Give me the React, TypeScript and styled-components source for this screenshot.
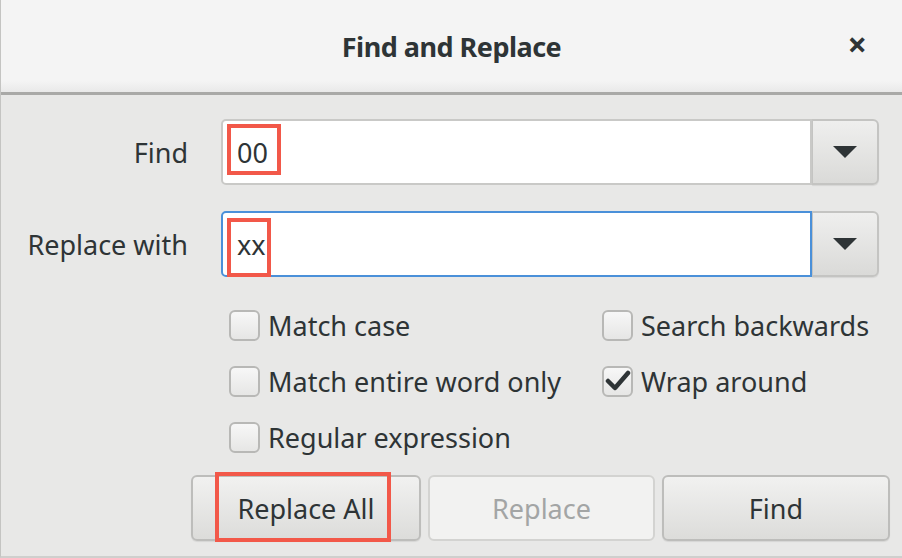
import { createGlobalStyle, styled } from "styled-components";

const GlobalStyle = createGlobalStyle`
  html, body {
    margin: 0;
    padding: 0;
    background: #e8e8e7;
  }
  * {
    box-sizing: border-box;
  }
`;

const FONT = `"Noto Sans", "Open Sans", sans-serif`;

function ArrowDown() {
	return (
		<svg width="26" height="14" viewBox="0 0 26 14">
			<path d="M1 1 H25 L13 13 Z" fill="#2e3436" />
		</svg>
	);
}

function CheckMark() {
	return (
		<svg width="26" height="24" viewBox="0 0 26 24">
			<path
				d="M3 12 L10 19 L23 4"
				fill="none"
				stroke="#2e3436"
				strokeWidth="4.5"
				strokeLinecap="round"
				strokeLinejoin="round"
			/>
		</svg>
	);
}

function Check({ label, checked = false }: { label: string; checked?: boolean }) {
	return (
		<CheckRow>
			<CheckBox>{checked && <CheckMark />}</CheckBox>
			<CheckLabel>{label}</CheckLabel>
		</CheckRow>
	);
}

export default function App() {
	return (
		<>
			<GlobalStyle />
			<Window>
				<TitleBar>
					<Title>Find and Replace</Title>
					<CloseButton aria-label="Close">×</CloseButton>
				</TitleBar>
				<Body>
					<FieldRow>
						<FieldLabel htmlFor="find-entry">Find</FieldLabel>
						<Combo>
							<EntryWrap>
								<Entry id="find-entry" value="00" readOnly />
								<Mark $left={4} $top={3} $width={54} $height={51} />
							</EntryWrap>
							<DropButton>
								<ArrowDown />
							</DropButton>
						</Combo>
					</FieldRow>
					<FieldRow>
						<FieldLabel htmlFor="replace-entry">Replace with</FieldLabel>
						<Combo>
							<EntryWrap $focused>
								<Entry id="replace-entry" value="xx" readOnly />
								<Mark $left={4} $top={5} $width={44} $height={59} />
							</EntryWrap>
							<DropButton>
								<ArrowDown />
							</DropButton>
						</Combo>
					</FieldRow>
					<Options>
						<Check label="Match case" />
						<Check label="Search backwards" />
						<Check label="Match entire word only" />
						<Check label="Wrap around" checked />
						<Check label="Regular expression" />
					</Options>
					<ButtonBar>
						<Button>
							Replace All
							<Mark $left={22} $top={-5} $width={176} $height={70} />
						</Button>
						<Button disabled>Replace</Button>
						<Button>Find</Button>
					</ButtonBar>
				</Body>
			</Window>
		</>
	);
}

//#region Styled Components
const Window = styled.div`
  width: 902px;
  height: 558px;
  display: flex;
  flex-direction: column;
  background: #e8e8e7;
  border-left: 1px solid #c4c4c2;
  border-bottom: 2px solid #cfcfcd;
  font-family: ${FONT};
  color: #2e3436;
  overflow: hidden;
`;

const TitleBar = styled.div`
  height: 95px;
  flex-shrink: 0;
  display: flex;
  align-items: center;
  justify-content: center;
  position: relative;
  background: linear-gradient(to bottom, #f4f4f4 0%, #f4f4f4 88%, #e9e9e9 100%);
  border-bottom: 3px solid #a9a9a7;
`;

const Title = styled.h1`
  margin: 0;
  font-size: 27px;
  font-weight: 700;
  letter-spacing: -0.5px;
  color: #2e3436;
  padding-top: 0;
`;

const CloseButton = styled.button`
  position: absolute;
  right: 35px;
  top: 27px;
  border: none;
  background: transparent;
  font-family: ${FONT};
  font-size: 34px;
  font-weight: 700;
  line-height: 1;
  color: #2e3436;
  padding: 0;
`;

const Body = styled.div`
  display: flex;
  flex-direction: column;
  padding: 24px 13px 0 0;
`;

const FieldRow = styled.div`
  display: grid;
  grid-template-columns: 187px 1fr;
  column-gap: 33px;
  align-items: center;
  padding-right: 10px;
  margin-bottom: 26px;
`;

const FieldLabel = styled.label`
  text-align: right;
  font-size: 27px;
  color: #2e3436;
`;

const Combo = styled.div`
  display: flex;
  height: 66px;
`;

const EntryWrap = styled.div<{ $focused?: boolean }>`
  flex: 1;
  position: relative;
  background: #ffffff;
  border: ${({ $focused }) => ($focused ? "2px solid #4a90d9" : "2px solid #c9c9c7")};
  border-radius: 5px 0 0 5px;
  display: flex;
  align-items: center;
`;

const Entry = styled.input`
  border: none;
  outline: none;
  background: transparent;
  width: 100%;
  height: 100%;
  padding: 0 0 0 14px;
  font-family: ${FONT};
  font-size: 27px;
  color: #2e3436;
`;

const Mark = styled.span<{ $left: number; $top: number; $width: number; $height: number }>`
  position: absolute;
  left: ${({ $left }) => $left}px;
  top: ${({ $top }) => $top}px;
  width: ${({ $width }) => $width}px;
  height: ${({ $height }) => $height}px;
  border: 4px solid #f25849;
  pointer-events: none;
`;

const DropButton = styled.button`
  width: 67px;
  display: flex;
  align-items: center;
  justify-content: center;
  background: linear-gradient(to bottom, #efefee, #dadad8);
  border: 2px solid #c4c4c2;
  border-left: 1px solid #c4c4c2;
  border-radius: 0 6px 6px 0;
  padding: 0;
  box-shadow: 0 1px 1px rgba(0, 0, 0, 0.08);
`;

const Options = styled.div`
  display: grid;
  grid-template-columns: 373px auto;
  row-gap: 20px;
  padding-left: 228px;
  margin-top: 4px;
`;

const CheckRow = styled.div`
  display: flex;
  align-items: center;
  gap: 8px;
  height: 36px;
`;

const CheckBox = styled.span`
  width: 31px;
  height: 31px;
  flex-shrink: 0;
  display: flex;
  align-items: center;
  justify-content: center;
  border: 2px solid #b8b8b6;
  border-radius: 6px;
  background: linear-gradient(to bottom, #f7f7f7, #e6e6e5);
`;

const CheckLabel = styled.span`
  font-size: 27px;
  color: #2e3436;
  white-space: nowrap;
`;

const ButtonBar = styled.div`
  display: grid;
  grid-template-columns: 230px 227px 228px;
  column-gap: 7px;
  padding-left: 190px;
  margin-top: 20px;
`;

const Button = styled.button`
  position: relative;
  height: 66px;
  font-family: ${FONT};
  font-size: 27px;
  color: #2e3436;
  background: linear-gradient(to bottom, #f1f1f0, #dcdcda);
  border: 2px solid #bdbdbb;
  border-radius: 6px;
  box-shadow: 0 1px 1px rgba(0, 0, 0, 0.08);
  padding: 0;

  &:disabled {
    color: #a3a5a5;
    background: #f2f2f1;
    border-color: #d3d3d1;
    box-shadow: none;
  }
`;
//#endregion
